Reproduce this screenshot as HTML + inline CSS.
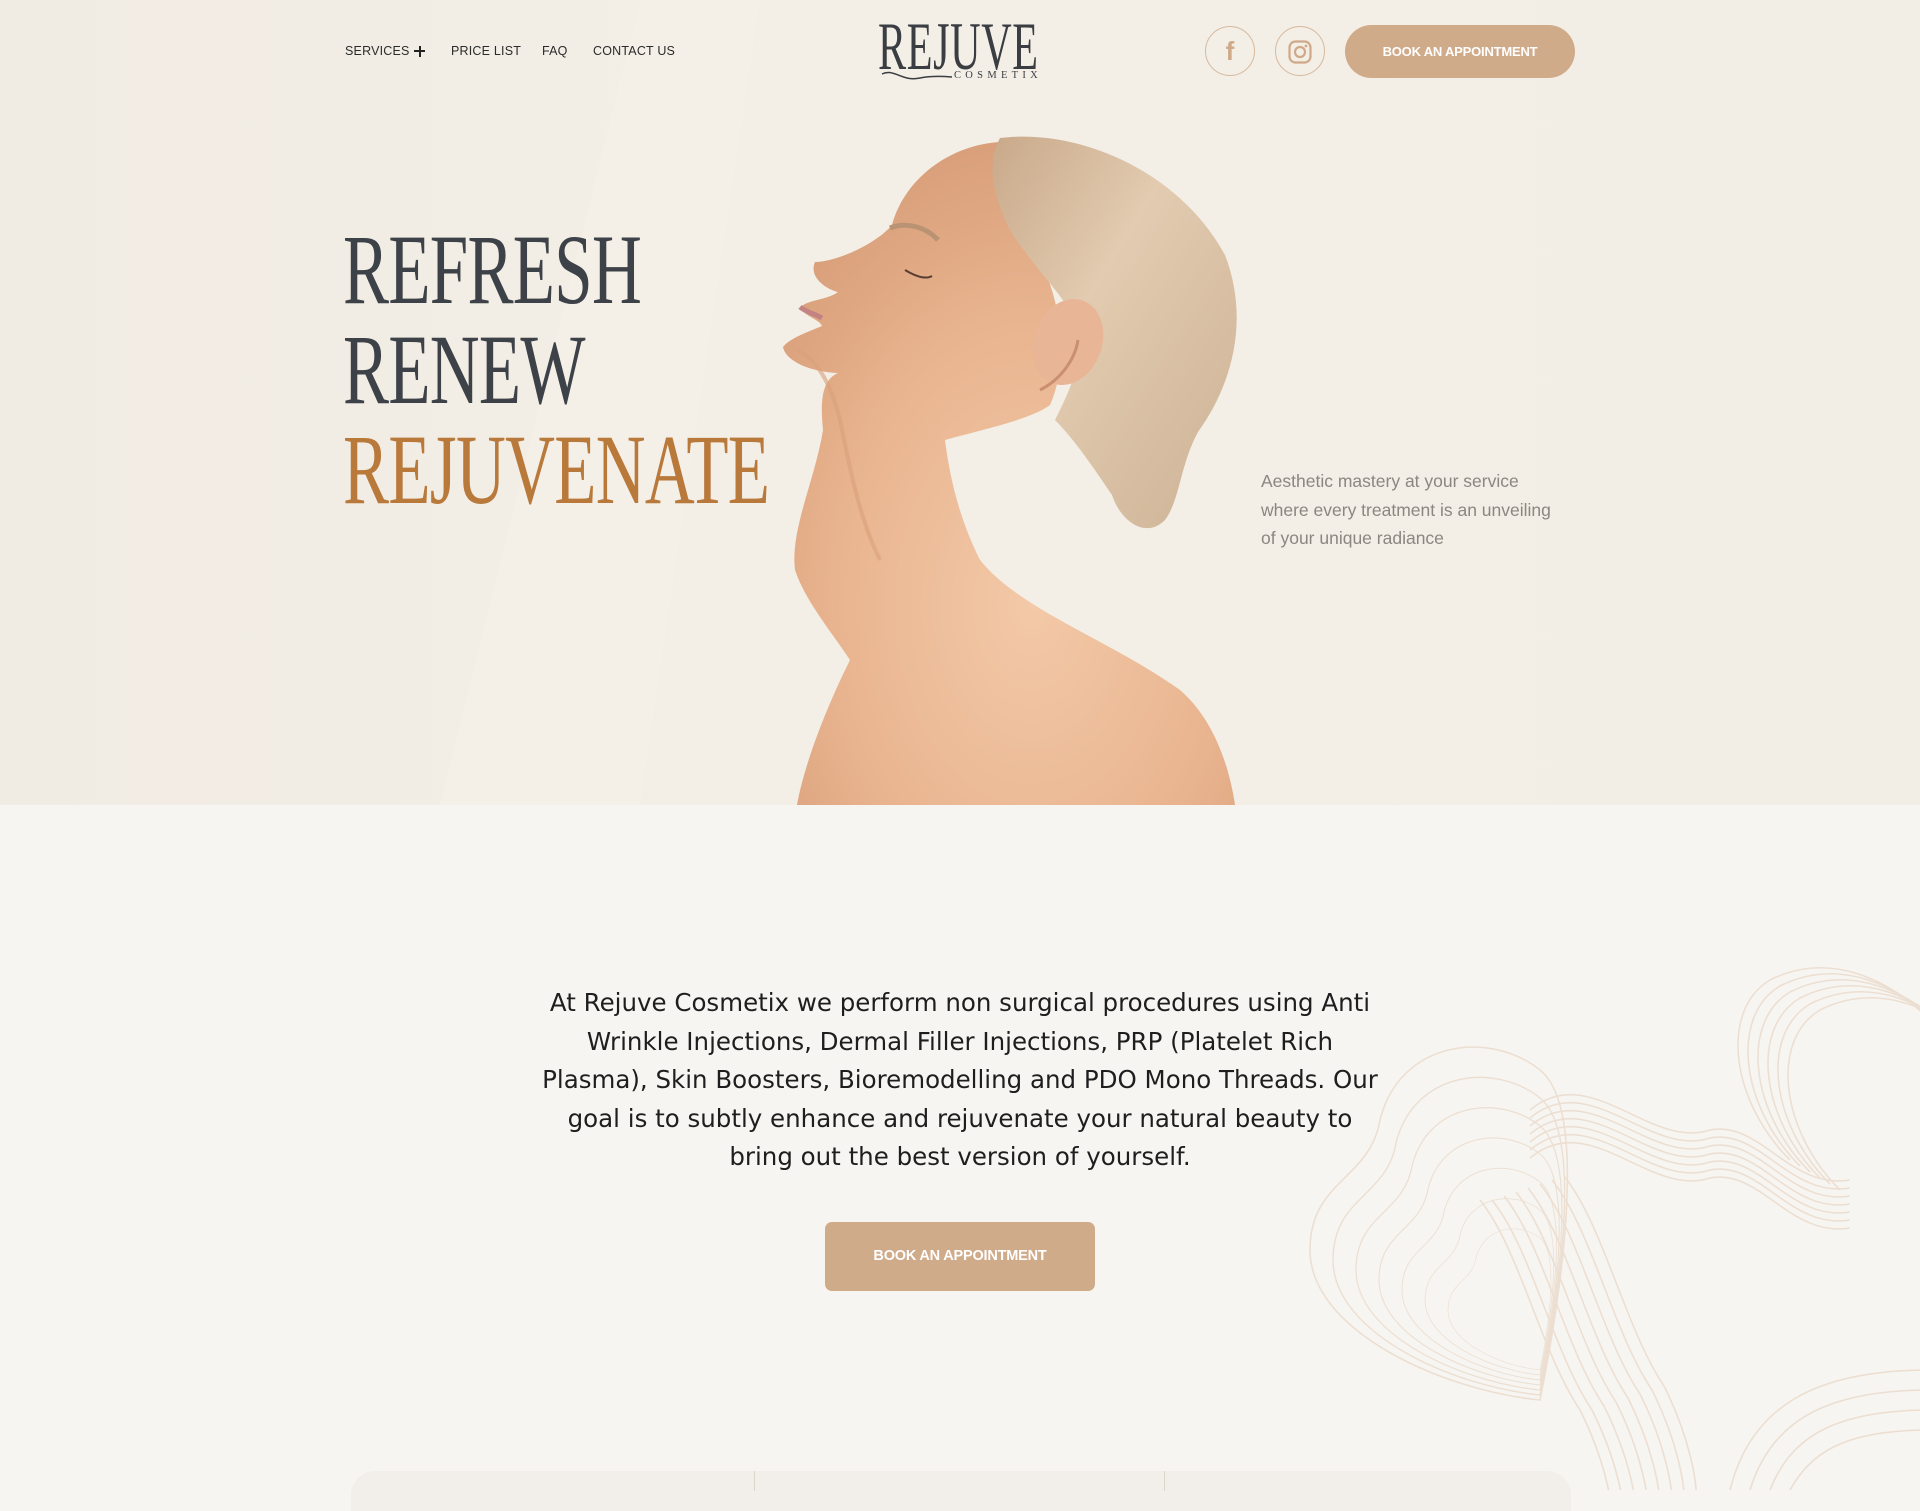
<!DOCTYPE html>
<html><head><meta charset="utf-8">
<style>
*{margin:0;padding:0;box-sizing:border-box}
body{width:1920px;height:1490px;overflow:hidden;background:#f7f5f1;font-family:"Liberation Sans",sans-serif;position:relative}
.hero{position:absolute;left:0;top:0;width:1920px;height:805px;background:linear-gradient(90deg,#f1ece3 0%,#f3eee6 40%,#f3eee5 100%)}
.nav{position:absolute;top:44px;font-size:12.5px;color:#2b2b2b;letter-spacing:.2px}
.circ{position:absolute;top:26px;width:50px;height:50px;border:1px solid #d7b99c;border-radius:50%}
.btn{position:absolute;background:#d0ab8a;color:#fff;font-weight:bold;text-align:center;letter-spacing:-.2px}
.hl{position:absolute;left:343px;font-family:"Liberation Serif",serif;font-size:100px;line-height:1;transform:scaleX(.69);transform-origin:left top;letter-spacing:-1px;white-space:nowrap}
.tag{position:absolute;left:1261px;top:467px;font-size:17.5px;line-height:28.5px;color:#8b8680}
.para{position:absolute;left:537px;top:984px;width:846px;text-align:center;font-family:"DejaVu Sans",sans-serif;font-size:24.5px;line-height:38.6px;color:#1e1e1e}
</style></head><body>
<div class="hero"></div>
<svg style="position:absolute;left:0;top:0" width="1920" height="805"><path d="M640 0 L760 0 L640 805 L440 805Z" fill="#f6f2ea" opacity=".5"/></svg>

<div class="nav" style="left:345px">SERVICES</div>
<div style="position:absolute;left:414px;top:50px;width:11px;height:2px;background:#222"></div>
<div style="position:absolute;left:418.5px;top:45.5px;width:2px;height:11px;background:#222"></div>
<div class="nav" style="left:451px">PRICE LIST</div>
<div class="nav" style="left:542px">FAQ</div>
<div class="nav" style="left:593px">CONTACT US</div>

<div style="position:absolute;left:878px;top:12px;font-family:'Liberation Serif',serif;font-size:68px;color:#3a3d42;transform:scaleX(.62);transform-origin:left top;letter-spacing:1px;line-height:1">REJUVE</div>
<svg style="position:absolute;left:880px;top:68px" width="80" height="16"><path d="M2 6 C14 0 22 14 40 10 C50 8 60 8 72 9" fill="none" stroke="#3a3d42" stroke-width="1.5"/></svg>
<div style="position:absolute;left:954px;top:70px;font-size:10.5px;letter-spacing:4.3px;color:#3a3d42;font-family:'Liberation Serif',serif">COSMETIX</div>

<div class="circ" style="left:1205px"></div>
<div style="position:absolute;left:1205px;top:26px;width:50px;height:50px;text-align:center;line-height:50px;font-size:26px;font-weight:bold;color:#cfa989;font-family:'Liberation Sans'">f</div>
<div class="circ" style="left:1275px"></div>
<svg style="position:absolute;left:1287px;top:39px" width="26" height="26"><rect x="2.5" y="2.5" width="21" height="21" rx="6" fill="none" stroke="#cfa989" stroke-width="2.2"/><circle cx="13" cy="13" r="5" fill="none" stroke="#cfa989" stroke-width="2.2"/><circle cx="19" cy="7" r="1.4" fill="#cfa989"/></svg>
<div class="btn" style="left:1345px;top:25px;width:230px;height:53px;border-radius:27px;line-height:53px;font-size:13px">BOOK AN APPOINTMENT</div>

<div class="hl" style="top:220px;color:#3d4148">REFRESH</div>
<div class="hl" style="top:320px;color:#3d4148">RENEW</div>
<div class="hl" style="top:420px;color:#b9793b">REJUVENATE</div>

<svg style="position:absolute;left:0;top:0" width="1920" height="805">
<defs>
<linearGradient id="hair" x1="0" y1="0" x2="1" y2="1"><stop offset="0" stop-color="#c9a98a"/><stop offset=".4" stop-color="#e2cbb0"/><stop offset="1" stop-color="#cdb295"/></linearGradient>
<radialGradient id="skin" cx=".55" cy=".7" r=".7"><stop offset="0" stop-color="#f3c9a8"/><stop offset=".6" stop-color="#e9b590"/><stop offset="1" stop-color="#d9a07b"/></radialGradient>
</defs>
<path d="M1000 142 C950 145 905 178 892 225 C875 245 835 262 815 262 C808 278 828 290 838 292 C828 300 805 300 800 308 C805 316 820 320 822 326 C808 332 790 338 783 347 C786 362 812 372 838 373 C822 380 820 400 823 430 C815 480 790 530 795 570 C805 600 830 630 850 660 C830 700 805 760 797 805 L1235 805 C1230 770 1215 720 1180 690 C1110 640 1020 610 980 560 C960 520 950 480 945 440 C980 430 1030 420 1050 405 C1070 360 1060 300 1040 260 C1020 230 1010 190 1000 142Z" fill="url(#skin)"/>
<path d="M1000 138 C1080 128 1180 172 1225 255 C1250 320 1232 385 1198 432 C1180 465 1180 500 1165 520 C1145 540 1120 520 1112 495 C1095 470 1075 440 1055 420 C1070 390 1085 360 1075 320 C1060 290 1035 270 1010 230 C995 200 985 165 1000 138Z" fill="url(#hair)"/>
<ellipse cx="1068" cy="342" rx="34" ry="44" fill="#e9b597" transform="rotate(20 1068 342)"/>
<path d="M1040 390 C1060 380 1075 360 1078 340" fill="none" stroke="#c98f70" stroke-width="3"/>
<path d="M905 270 C915 276 925 280 932 276" stroke="#5a3e33" stroke-width="2" fill="none"/>
<path d="M890 228 C905 222 925 226 938 240" stroke="#b99373" stroke-width="5" fill="none"/>
<path d="M797 350 C815 358 830 380 840 420 C850 470 860 520 880 560" fill="none" stroke="#d9a07b" stroke-width="4" opacity=".6"/>
<path d="M800 307 C806 312 815 314 822 318" stroke="#c48383" stroke-width="5" fill="none"/>
</svg>

<div class="tag">Aesthetic mastery at your service<br>where every treatment is an unveiling<br>of your unique radiance</div>

<svg style="position:absolute;left:1290px;top:950px" width="630" height="540">
<g fill="none" stroke="#ecdfd2" stroke-width="1.6">
<defs><path id="pa" d="M250 450 C150 440 20 380 20 300 C20 230 80 230 90 170 C110 90 200 80 250 120 C300 160 270 350 250 450Z"/>
<path id="pb" d="M240 160 C300 110 360 200 420 180 C470 170 500 240 560 230"/>
<path id="pc" d="M190 250 C230 300 250 400 290 460 C310 500 330 560 320 600"/>
<path id="pd" d="M500 210 C440 150 430 60 480 30 C540 0 600 30 640 70"/></defs>
<use href="#pa"/><use href="#pa" transform="translate(25 40) scale(.9)"/><use href="#pa" transform="translate(50 80) scale(.8)"/><use href="#pa" transform="translate(75 120) scale(.7)"/><use href="#pa" transform="translate(100 160) scale(.6)"/><use href="#pa" transform="translate(125 200) scale(.5)"/><use href="#pa" transform="translate(150 240) scale(.4)"/>
<use href="#pb"/><use href="#pb" transform="translate(0 8)"/><use href="#pb" transform="translate(0 16)"/><use href="#pb" transform="translate(0 24)"/><use href="#pb" transform="translate(0 32)"/><use href="#pb" transform="translate(0 40)"/><use href="#pb" transform="translate(0 48)"/>
<use href="#pc"/><use href="#pc" transform="translate(12 0)"/><use href="#pc" transform="translate(24 -4)"/><use href="#pc" transform="translate(36 -8)"/><use href="#pc" transform="translate(48 -12)"/><use href="#pc" transform="translate(60 -16)"/><use href="#pc" transform="translate(72 -20)"/><use href="#pc" transform="translate(84 -24)"/>
<use href="#pd"/><use href="#pd" transform="translate(10 6)"/><use href="#pd" transform="translate(20 12)"/><use href="#pd" transform="translate(30 18)"/><use href="#pd" transform="translate(40 24)"/><use href="#pd" transform="translate(50 30)"/>
<path d="M440 540 C460 460 520 420 640 420"/><path d="M460 540 C480 475 530 440 640 440"/><path d="M480 540 C500 490 540 460 640 460"/><path d="M500 540 C520 505 550 480 640 480"/>
</g></svg>

<div class="para">At Rejuve Cosmetix we perform non surgical procedures using Anti Wrinkle Injections, Dermal Filler Injections, PRP (Platelet Rich Plasma), Skin Boosters, Bioremodelling and PDO Mono Threads. Our goal is to subtly enhance and rejuvenate your natural beauty to bring out the best version of yourself.</div>
<div class="btn" style="left:825px;top:1222px;width:270px;height:69px;border-radius:7px;line-height:69px;font-size:14.5px">BOOK AN APPOINTMENT</div>

<div style="position:absolute;left:351px;top:1471px;width:1220px;height:40px;background:#f2efea;border-radius:24px 24px 0 0"></div>
<div style="position:absolute;left:754px;top:1471px;width:1px;height:20px;background:#ddd6cc"></div>
<div style="position:absolute;left:1164px;top:1471px;width:1px;height:20px;background:#ddd6cc"></div>
</body></html>
